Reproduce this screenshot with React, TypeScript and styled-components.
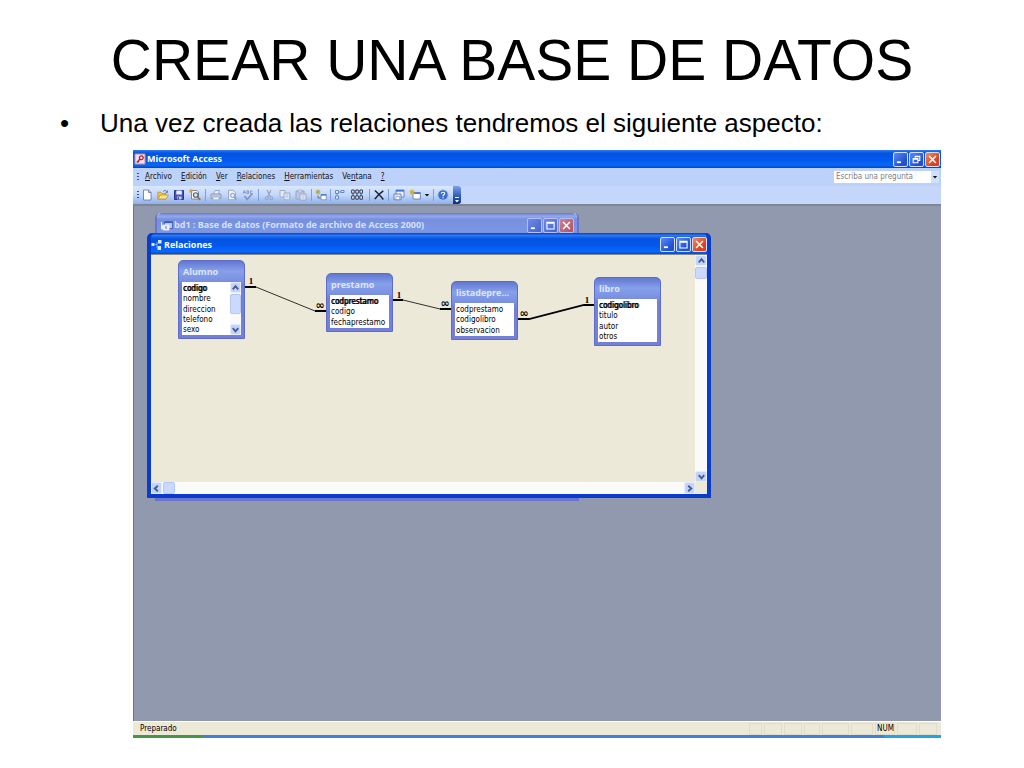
import React from "react";
import styled, { createGlobalStyle, css } from "styled-components";

const uiFont = `"DejaVu Sans Condensed", "Noto Sans", sans-serif`;
const captionFont = `"Open Sans", "Noto Sans", sans-serif`;

const GlobalStyle = createGlobalStyle`
  * { box-sizing: border-box; }
  body { margin: 0; background: #fff; color: #000; font-family: "Liberation Sans", Arial, sans-serif; }
  button, input { font: inherit; margin: 0; padding: 0; border: 0; }
  ul { list-style: none; margin: 0; padding: 0; }
  svg { display: block; }
`;

const Slide = styled.main`
  padding: 24px 0 30px;
`;

const SlideTitle = styled.h1`
  margin: 0;
  text-align: center;
  font-size: 57px;
  line-height: 72px;
  font-weight: 400;
`;

const Points = styled.ul`
  padding: 12px 60px 11px;
`;

const Point = styled.li`
  display: flex;
  font-size: 26px;
  line-height: 31px;

  &::before {
    content: "•";
    flex: 0 0 40px;
  }
`;

const AppWindow = styled.section`
  margin: 0 83px 0 133px;
  font-family: ${uiFont};
  font-size: 8px;
  line-height: 10px;
`;

const CaptionBar = styled.header<{ $tone: "app" | "active" | "inactive" }>`
  display: flex;
  align-items: center;
  gap: 1px;
  flex: none;
  font-family: ${captionFont};
  font-size: 9px;
  line-height: 12px;
  font-weight: 700;
  color: #fff;
  ${({ $tone }) =>
    $tone === "app" &&
    css`
      height: 18px;
      padding: 0 1px 0 1px;
      background: linear-gradient(#2e7bf0, #0453e2 18%, #0459ea 55%, #0668fb 85%, #0345c4);
    `}
  ${({ $tone }) =>
    $tone === "active" &&
    css`
      height: 21px;
      padding: 2px 0 0;
      border-radius: 5px 5px 0 0;
      background: linear-gradient(#0a3fc0, #2a78f4 12%, #0453e0 28%, #0558ec 60%, #0668fd 88%, #0349cc);
    `}
  ${({ $tone }) =>
    $tone === "inactive" &&
    css`
      height: 22px;
      padding: 2px 3px 0 4px;
      color: #d6e0fa;
      border-radius: 5px 5px 0 0;
      background: linear-gradient(#6875d0, #94aaec 14%, #768fdf 30%, #7b96e2 80%, #7b90de);
    `}
`;

const CaptionText = styled.h2`
  flex: 1;
  margin: 0;
  font: inherit;
  white-space: nowrap;
`;

const CaptionButtons = styled.div`
  display: flex;
  gap: 1px;
`;

const CaptionButton = styled.button<{ $close?: boolean; $dim?: boolean }>`
  width: 15px;
  height: 15px;
  display: grid;
  place-items: center;
  border: 1px solid ${({ $dim }) => ($dim ? "#b3bff0" : "#d3dffc")};
  border-radius: 2px;
  background: ${({ $close, $dim }) =>
    $close
      ? $dim
        ? "linear-gradient(135deg, #c98298, #b4505f)"
        : "linear-gradient(135deg, #f08a66, #d9431c 70%)"
      : $dim
        ? "linear-gradient(135deg, #6f8ae6, #4463cf)"
        : "linear-gradient(135deg, #5c8cf4, #2251d6 70%)"};
`;

const MenuBar = styled.nav`
  display: flex;
  align-items: center;
  gap: 9px;
  height: 18px;
  padding: 0 2px 0 4px;
  background: #bdd2fa;
`;

const MenuItem = styled.button`
  background: none;
  color: #111;
  line-height: 12px;
`;

const Grip = styled.span`
  width: 2px;
  height: 9px;
  background: repeating-linear-gradient(#35538f 0 1px, transparent 1px 3px);
`;

const MenuGrip = styled(Grip)`
  margin-right: -3px;
`;

const AskBox = styled.div`
  display: flex;
  width: 105px;
  height: 12px;
  margin-left: auto;
  background: #fff;
`;

const AskInput = styled.input`
  flex: 1;
  min-width: 0;
  padding-left: 2px;
  background: transparent;
  &::placeholder { color: #808080; opacity: 1; }
`;

const AskDrop = styled.button`
  width: 8px;
  display: grid;
  place-items: center;
  background: #cfe0fb;
`;

const ToolRow = styled.div`
  display: flex;
  height: 18px;
  background: #c4d7fa;
`;

const ToolStrip = styled.div`
  display: flex;
  align-items: center;
  padding-left: 4px;
  border-radius: 0 3px 3px 0;
  background: linear-gradient(#dbe8fd, #c2d7fa 50%, #8fb0ea);
`;

const ToolButton = styled.button<{ $width?: number }>`
  width: ${({ $width = 16 }) => $width}px;
  height: 16px;
  display: grid;
  place-items: center;
  background: none;
`;

const ToolRule = styled.span`
  width: 1px;
  height: 12px;
  margin: 0 2px;
  background: #7f9fd8;
`;

const Overflow = styled.button`
  width: 8px;
  height: 18px;
  margin-left: 3px;
  display: grid;
  place-items: end center;
  border-radius: 0 3px 3px 0;
  background: linear-gradient(#7ba0e8, #2b57b0 60%, #0a2f86);
`;

const Workspace = styled.div`
  position: relative;
  min-height: 517px;
  overflow: hidden;
  background: #9199ae;
  border-top: 2px solid #7f8696;
  border-left: 1px solid #6d7384;
`;

const DatabaseWindow = styled.section`
  position: absolute;
  left: 21px;
  top: 7px;
  width: 424px;
  height: 288px;
  border-radius: 5px 5px 0 0;
  border: solid #6a74cf;
  border-width: 0 2px 4px;
  background: #ece9d8;
`;

const RelationsWindow = styled.section`
  position: absolute;
  left: 13px;
  top: 27px;
  width: 564px;
  height: 265px;
  display: flex;
  flex-direction: column;
  border-radius: 5px 5px 0 0;
  border: solid #0a3ccb;
  border-width: 0 4px 4px;
  background: #0a3ccb;
`;

const RelationsBody = styled.div`
  flex: 1;
  display: grid;
  grid-template: 1fr 12px / 1fr 12px;
  background: #ece9d8;
  border-top: 1px solid #8b8b86;
`;

const Canvas = styled.div`
  position: relative;
  overflow: hidden;
`;

const Lines = styled.svg`
  position: absolute;
  inset: 0;
  width: 100%;
  height: 100%;
  font: bold 9px "Liberation Serif", serif;
`;

const ManySide = styled.text`
  font: bold 11px "DejaVu Sans", sans-serif;
`;

const ScrollBar = styled.div<{ $across?: boolean }>`
  display: flex;
  flex-direction: ${({ $across }) => ($across ? "row" : "column")};
  align-items: stretch;
  gap: 1px;
  background: #fafaf8;
`;

const ScrollArrow = styled.button`
  flex: 0 0 11px;
  min-width: 11px;
  display: grid;
  place-items: center;
  border-radius: 2px;
  border: 1px solid #e4ecfe;
  background: #c3d3fb;
`;

const ScrollThumb = styled.span<{ $size: number }>`
  flex: 0 0 ${({ $size }) => $size}px;
  border: 1px solid #b4c6f2;
  border-radius: 2px;
  background: #cbd9fc;
`;

const ScrollSpace = styled.span`
  flex: 1;
`;

const TableBox = styled.article<{ $x: number; $y: number; $height: number }>`
  position: absolute;
  left: ${({ $x }) => $x}px;
  top: ${({ $y }) => $y}px;
  width: 67px;
  height: ${({ $height }) => $height}px;
  display: flex;
  flex-direction: column;
  padding: 0 3px 3px;
  border-radius: 5px 5px 0 0;
  border: 1px solid #5d6cc8;
  background: linear-gradient(#6277d2, #86a0ea 10px, #7a90e0 20px, #7480d8 24px);
`;

const TableName = styled.h3`
  margin: 0;
  padding: 3px 1px 0;
  height: 21px;
  flex: none;
  font: 700 9px/16px ${captionFont};
  color: #dde6fc;
  white-space: nowrap;
`;

const TableBody = styled.div`
  flex: 1;
  display: flex;
  background: #fff;
`;

const Fields = styled.ul`
  flex: 1;
  min-width: 0;
  display: flex;
  flex-direction: column;
  padding: 2px 0 0 1px;
`;

const Field = styled.li<{ $key?: boolean }>`
  flex: 1;
  display: flex;
  align-items: center;
  white-space: nowrap;
  text-shadow: ${({ $key }) => ($key ? "0 0 0 #000, 1px 0 0 rgba(0, 0, 0, 0.7)" : "none")};
`;

const StatusBar = styled.footer`
  display: flex;
  align-items: center;
  gap: 2px;
  height: 14px;
  padding: 1px 4px 0 7px;
  background: #ece9d8;
  border-top: 1px solid #fff;
`;

const StatusText = styled.span`
  flex: 1;
`;

const StatusCell = styled.span<{ $width: number }>`
  width: ${({ $width }) => $width}px;
  height: 12px;
  padding-left: 1px;
  border: 1px solid #e0dccb;
`;

const TaskEdge = styled.div`
  height: 3px;
  background: linear-gradient(90deg, #46964a 70px, #3f80d8 71px, #3f80d8 750px, #22a4e4 752px);
`;

const Glyph = ({ d, size = 9, color = "#fff", w = 2 }: { d: string; size?: number; color?: string; w?: number }) => (
  <svg width={size} height={size} viewBox="0 0 10 10" fill="none" stroke={color} strokeWidth={w} aria-hidden="true">
    <path d={d} />
  </svg>
);

const chevrons = {
  up: "M2 7L5 3.5L8 7",
  down: "M2 3.5L5 7L8 3.5",
  left: "M6.5 2L3 5L6.5 8",
  right: "M3.5 2L7 5L3.5 8",
};

const Arrow = ({ dir }: { dir: keyof typeof chevrons }) => (
  <ScrollArrow aria-label={dir}>
    <Glyph d={chevrons[dir]} color="#42598c" w={2} size={9} />
  </ScrollArrow>
);

const WindowButtons = ({ dim, restore }: { dim?: boolean; restore?: boolean }) => (
  <CaptionButtons>
    <CaptionButton $dim={dim} aria-label="Minimizar"><Glyph d="M1 8H5.5" /></CaptionButton>
    <CaptionButton $dim={dim} aria-label={restore ? "Restaurar" : "Maximizar"}>
      {restore ? (
        <Glyph w={1.2} d="M3.5 3V1.3H8.7V6H7M3.5 1.8H8.7M1.3 4H6.5V8.7H1.3ZM1.3 4.6H6.5" />
      ) : (
        <Glyph w={1.2} d="M1 1.5H9V8.8H1ZM1 2.4H9" />
      )}
    </CaptionButton>
    <CaptionButton $close $dim={dim} aria-label="Cerrar"><Glyph w={1.7} d="M1.2 1.2L8.8 8.8M8.8 1.2L1.2 8.8" /></CaptionButton>
  </CaptionButtons>
);

const Icon = ({ children, width = 12 }: { children: React.ReactNode; width?: number }) => (
  <svg width={width} height="12" viewBox={`0 0 ${width} 12`} fill="none" aria-hidden="true">{children}</svg>
);

const icons = {
  access: (
    <Icon>
      <path d="M1 1H11V11H1Z" fill="#f6dfe4" stroke="#c98a9b" />
      <circle cx="7.3" cy="4.7" r="1.9" stroke="#a8233f" strokeWidth="1.3" />
      <path d="M6 6L2.8 9.5M4 8.2L5 9.2" stroke="#a8233f" strokeWidth="1.3" />
    </Icon>
  ),
  database: (
    <Icon>
      <path d="M3.5 2.5H11.5V9.5H3.5Z" fill="#b9c9f4" stroke="#4b62b8" />
      <path d="M4 3.5H11" stroke="#3d57b8" />
      <path d="M0.5 3V10H3M2.5 6H8V11H2.5Z" fill="#eef2ff" stroke="#e7ecff" />
      <path d="M5 7V10" stroke="#5870c0" />
    </Icon>
  ),
  relations: (
    <Icon>
      <path d="M0.5 4H3.5V7H0.5ZM7 1H10.5V4.5H7ZM6.5 7H10V11H6.5Z" fill="#d9e8ff" />
      <path d="M4 5.5H6M6 3V9" stroke="#7fb0ff" />
    </Icon>
  ),
  blank: (
    <Icon>
      <path d="M2.5 1H7.5L10 3.5V11H2.5Z" fill="#fff" stroke="#5a6f9f" strokeWidth=".8" />
      <path d="M7.5 1V3.5H10" stroke="#5a6f9f" strokeWidth=".8" />
    </Icon>
  ),
  open: (
    <Icon>
      <path d="M0.8 10V3.2H4L5 4.5H9V10Z" fill="#f2c14c" stroke="#b58a2c" strokeWidth=".7" />
      <path d="M1 10L3.3 6H11.5L9 10Z" fill="#ffe28a" stroke="#b58a2c" strokeWidth=".7" />
      <path d="M6 2.5C7.5 1 9 1 10 3M10.5 1.5V3.5H8.7" stroke="#3c67b8" strokeWidth=".8" />
    </Icon>
  ),
  save: (
    <Icon>
      <path d="M1.5 1.5H10.5V10.5H1.5Z" fill="#4b56bd" stroke="#2b318c" />
      <path d="M3.3 1.5H8.8V5.5H3.3Z" fill="#eaf0ff" />
      <path d="M4 7.5H8.5V10.5H4Z" fill="#c4cbe8" /><path d="M5.2 8V10.5" stroke="#232a7a" />
    </Icon>
  ),
  search: (
    <Icon>
      <path d="M2.5 1.5H8L9.5 3V10H2.5Z" fill="#fff" stroke="#6a6f80" strokeWidth=".8" />
      <path d="M0.5 0.5H3.5V3.5H0.5Z" fill="#d99a2c" />
      <circle cx="6.7" cy="6" r="2.3" fill="#cfe6ff" stroke="#50607c" strokeWidth="1.1" />
      <path d="M8.4 7.8L11.2 10.8" stroke="#a0701e" strokeWidth="1.7" />
    </Icon>
  ),
  print: (
    <Icon>
      <path d="M3.5 5L5 1.5H9.5L8.5 5" fill="#e9eef8" stroke="#98a8c8" />
      <path d="M1 5H11V9.5H1Z" fill="#bcc8de" stroke="#8d9dbf" />
      <path d="M3 8H9V10.8H3Z" fill="#eef2fa" stroke="#98a8c8" strokeWidth=".7" />
    </Icon>
  ),
  preview: (
    <Icon>
      <path d="M2.5 1.2H7L9.5 3.5V10.8H2.5Z" fill="#e9effb" stroke="#98a8c8" />
      <circle cx="6.6" cy="6.4" r="2" stroke="#8697ba" />
      <path d="M8 8L10.5 10.5" stroke="#8697ba" strokeWidth="1.4" />
    </Icon>
  ),
  spelling: (
    <Icon>
      <path d="M1 4.5L2.3 1.5L3.6 4.5M1.5 3.5H3.2M5 1.5V4.5H6.6V1.8H5M10.5 2H8.5V4.5H10.5" stroke="#8293b8" strokeWidth=".9" />
      <path d="M2.5 7L5.2 10.5L10.5 4.5" stroke="#8293c6" strokeWidth="1.7" />
    </Icon>
  ),
  cut: (
    <Icon>
      <path d="M4 1L7.5 8M8 1L4.5 8" stroke="#8f9fbf" strokeWidth="1.1" />
      <circle cx="3.7" cy="9.3" r="1.5" stroke="#8f9fbf" /><circle cx="8.3" cy="9.3" r="1.5" stroke="#8f9fbf" />
    </Icon>
  ),
  copy: (
    <Icon>
      <path d="M1 1.5H6V8H1Z" fill="#e4ebf8" stroke="#9dacca" />
      <path d="M5 4H10.8V10.8H5Z" fill="#e4ebf8" stroke="#9dacca" />
      <path d="M6.3 6H9.5M6.3 8H9.5" stroke="#9dacca" strokeWidth=".8" />
    </Icon>
  ),
  paste: (
    <Icon>
      <path d="M1 2H9V10H1Z" fill="#bac7df" stroke="#97a6c4" />
      <path d="M3.3 1H6.7V3H3.3Z" fill="#e8edf7" stroke="#97a6c4" strokeWidth=".7" />
      <path d="M5 5H11V11H5Z" fill="#edf1fa" stroke="#97a6c4" /><path d="M6.5 7H9.7M6.5 9H9.7" stroke="#97a6c4" strokeWidth=".8" />
    </Icon>
  ),
  showTable: (
    <Icon>
      <path d="M3 0.5V5.5M0.5 3H5.5M1.2 1.2L4.8 4.8M4.8 1.2L1.2 4.8" stroke="#b5a22e" />
      <path d="M6 5.5H11.3V10.8H6Z" fill="#fff" stroke="#6a82b8" strokeWidth=".8" />
      <path d="M6 6H11.3" stroke="#4677d0" strokeWidth="1.4" />
      <path d="M3 6.5V9H5.5" stroke="#44578c" strokeWidth=".8" />
    </Icon>
  ),
  direct: (
    <Icon>
      <path d="M1.5 1.5H4.5V4.5H1.5ZM7 1.5H10V3.5H7ZM1.5 7H4.5V10H1.5Z" fill="#e5eeff" stroke="#5a7fc4" strokeWidth=".9" />
      <path d="M4.5 3H7M3 4.5V7" stroke="#5a7fc4" strokeWidth=".8" />
    </Icon>
  ),
  all: (
    <Icon>
      <path d="M0.7 1H3.2V4.2H0.7ZM4.8 1H7.3V4.2H4.8ZM8.9 1H11.4V4.2H8.9ZM0.7 6.8H3.2V10.2H0.7ZM4.8 6.8H7.3V10.2H4.8ZM8.9 6.8H11.4V10.2H8.9Z" fill="#fff" stroke="#28365c" strokeWidth="1" />
      <path d="M2 4.5V6.5M6 4.5V6.5M10 4.5V6.5" stroke="#28365c" strokeWidth=".8" />
    </Icon>
  ),
  remove: (
    <Icon>
      <path d="M1.8 1.5C5 4 7.5 7 10.3 10.4M10.3 1.8C7 4 4 7 1.8 10.2" stroke="#1b2236" strokeWidth="1.5" />
    </Icon>
  ),
  dbWindow: (
    <Icon>
      <path d="M3 1H11V8H3Z" fill="#eaf1ff" stroke="#5570b4" strokeWidth=".8" /><path d="M3 1.8H11" stroke="#4373d2" strokeWidth="1.6" />
      <path d="M1 5H8V10.8H1Z" fill="#dce7fa" stroke="#5570b4" strokeWidth=".8" /><path d="M3 7.5H6.5V10.5H3Z" fill="#fff" stroke="#8898b8" strokeWidth=".7" />
    </Icon>
  ),
  newObject: (
    <Icon>
      <path d="M4 3.5H11.3V10H4Z" fill="#fff" stroke="#5570b4" strokeWidth=".8" /><path d="M4 4.2H11.3" stroke="#4373d2" strokeWidth="1.5" />
      <path d="M3 0.5V6M0.5 3H5.8M1.3 1.3L4.8 4.8M4.8 1.3L1.3 4.8" stroke="#d8ad2a" strokeWidth="1.1" />
    </Icon>
  ),
  help: (
    <Icon>
      <circle cx="6" cy="6" r="5.2" fill="#3c70cc" stroke="#a8c3f0" />
      <path d="M4.3 4.6C4.5 2.8 7.7 2.8 7.7 4.6C7.7 5.8 6 5.8 6 7.2M6 8.2V9.2" stroke="#fff" strokeWidth="1.2" />
    </Icon>
  ),
  drop: (
    <Icon width={6}><path d="M0.8 5H5.2L3 7.5Z" fill="#111" /></Icon>
  ),
};

type Tool = [keyof typeof icons, string, number?];

const toolGroups: Tool[][] = [
  [["blank", "Nuevo"], ["open", "Abrir"], ["save", "Guardar"], ["search", "Buscar archivo"]],
  [["print", "Imprimir"], ["preview", "Vista preliminar"], ["spelling", "Ortografía"]],
  [["cut", "Cortar"], ["copy", "Copiar"], ["paste", "Pegar"]],
  [["showTable", "Mostrar tabla", 14]],
  [["direct", "Mostrar relaciones directas", 14], ["all", "Mostrar todas las relaciones", 20]],
  [["remove", "Eliminar", 14]],
  [["dbWindow", "Ventana Base de datos"], ["newObject", "Nuevo objeto"], ["drop", "Más objetos", 8]],
  [["help", "Ayuda", 14]],
];

const menus = [
  ["", "A", "rchivo"],
  ["", "E", "dición"],
  ["", "V", "er"],
  ["", "R", "elaciones"],
  ["", "H", "erramientas"],
  ["Ve", "n", "tana"],
  ["", "?", ""],
];

const tables = [
  { name: "Alumno", x: 27, y: 5, height: 79, primary: "codigo", fields: ["codigo", "nombre", "direccion", "telefono", "sexo"], scroll: true },
  { name: "prestamo", x: 175, y: 18, height: 59, primary: "codprestamo", fields: ["codprestamo", "codigo", "fechaprestamo"] },
  { name: "listadepre...", x: 300, y: 26, height: 59, fields: ["codprestamo", "codigolibro", "observacion"] },
  { name: "libro", x: 443, y: 22, height: 69, primary: "codigolibro", fields: ["codigolibro", "titulo", "autor", "otros"] },
];

const statusCells = [13, 18, 18, 16, 27, 22];

export default function App() {
  return (
    <>
      <GlobalStyle />
      <Slide>
        <SlideTitle>CREAR UNA BASE DE DATOS</SlideTitle>
        <Points>
          <Point>Una vez creada las relaciones tendremos el siguiente aspecto:</Point>
        </Points>

        <AppWindow>
          <CaptionBar $tone="app">
            {icons.access}
            <CaptionText>Microsoft Access</CaptionText>
            <WindowButtons restore />
          </CaptionBar>

          <MenuBar>
            <MenuGrip />
            {menus.map(([before, key, after]) => (
              <MenuItem key={key + after}>{before}<u>{key}</u>{after}</MenuItem>
            ))}
            <AskBox>
              <AskInput aria-label="Escriba una pregunta" placeholder="Escriba una pregunta" />
              <AskDrop aria-label="Preguntas recientes">{icons.drop}</AskDrop>
            </AskBox>
          </MenuBar>

          <ToolRow>
            <ToolStrip>
              <Grip />
              {toolGroups.map((group, i) => (
                <React.Fragment key={i}>
                  {i > 0 && <ToolRule />}
                  {group.map(([icon, label, width]) => (
                    <ToolButton key={icon} $width={width} aria-label={label}>{icons[icon]}</ToolButton>
                  ))}
                </React.Fragment>
              ))}
              <Overflow aria-label="Opciones de barra de herramientas">
                <svg width="6" height="8" viewBox="0 0 6 8" fill="none"><path d="M1 1.5H5" stroke="#fff" /><path d="M1 4H5L3 6.5Z" fill="#fff" /></svg>
              </Overflow>
            </ToolStrip>
          </ToolRow>

          <Workspace>
            <DatabaseWindow>
              <CaptionBar $tone="inactive">
                {icons.database}
                <CaptionText>bd1 : Base de datos (Formato de archivo de Access 2000)</CaptionText>
                <WindowButtons dim />
              </CaptionBar>
            </DatabaseWindow>

            <RelationsWindow>
              <CaptionBar $tone="active">
                {icons.relations}
                <CaptionText>Relaciones</CaptionText>
                <WindowButtons />
              </CaptionBar>
              <RelationsBody>
                <Canvas>
                  <Lines>
                    <g stroke="#000">
                      <path d="M105 32L164 56M252 45L289 54" strokeWidth=".8" />
                      <path d="M94 32H105M164 56H175M242 45H252M289 54H300" strokeWidth="2" />
                      <path d="M367 64H378L433 50H443" strokeWidth="1.8" fill="none" />
                    </g>
                    <g textAnchor="middle">
                      <text x="100" y="29">1</text>
                      <text x="248" y="43">1</text>
                      <text x="436" y="48">1</text>
                      <ManySide x="169" y="54">∞</ManySide>
                      <ManySide x="294" y="52">∞</ManySide>
                      <ManySide x="373" y="62">∞</ManySide>
                    </g>
                  </Lines>
                  {tables.map((t) => (
                    <TableBox key={t.name} $x={t.x} $y={t.y} $height={t.height}>
                      <TableName>{t.name}</TableName>
                      <TableBody>
                        <Fields>
                          {t.fields.map((f) => (
                            <Field key={f} $key={f === t.primary}>{f}</Field>
                          ))}
                        </Fields>
                        {t.scroll && (
                          <ScrollBar>
                            <Arrow dir="up" />
                            <ScrollThumb $size={20} />
                            <ScrollSpace />
                            <Arrow dir="down" />
                          </ScrollBar>
                        )}
                      </TableBody>
                    </TableBox>
                  ))}
                </Canvas>
                <ScrollBar>
                  <Arrow dir="up" />
                  <ScrollThumb $size={12} />
                  <ScrollSpace />
                  <Arrow dir="down" />
                </ScrollBar>
                <ScrollBar $across>
                  <Arrow dir="left" />
                  <ScrollThumb $size={12} />
                  <ScrollSpace />
                  <Arrow dir="right" />
                </ScrollBar>
              </RelationsBody>
            </RelationsWindow>
          </Workspace>

          <StatusBar>
            <StatusText>Preparado</StatusText>
            {statusCells.map((w, i) => (
              <StatusCell key={i} $width={w} />
            ))}
            <StatusCell $width={20}>NUM</StatusCell>
            <StatusCell $width={20} />
            <StatusCell $width={18} />
          </StatusBar>
          <TaskEdge />
        </AppWindow>
      </Slide>
    </>
  );
}
